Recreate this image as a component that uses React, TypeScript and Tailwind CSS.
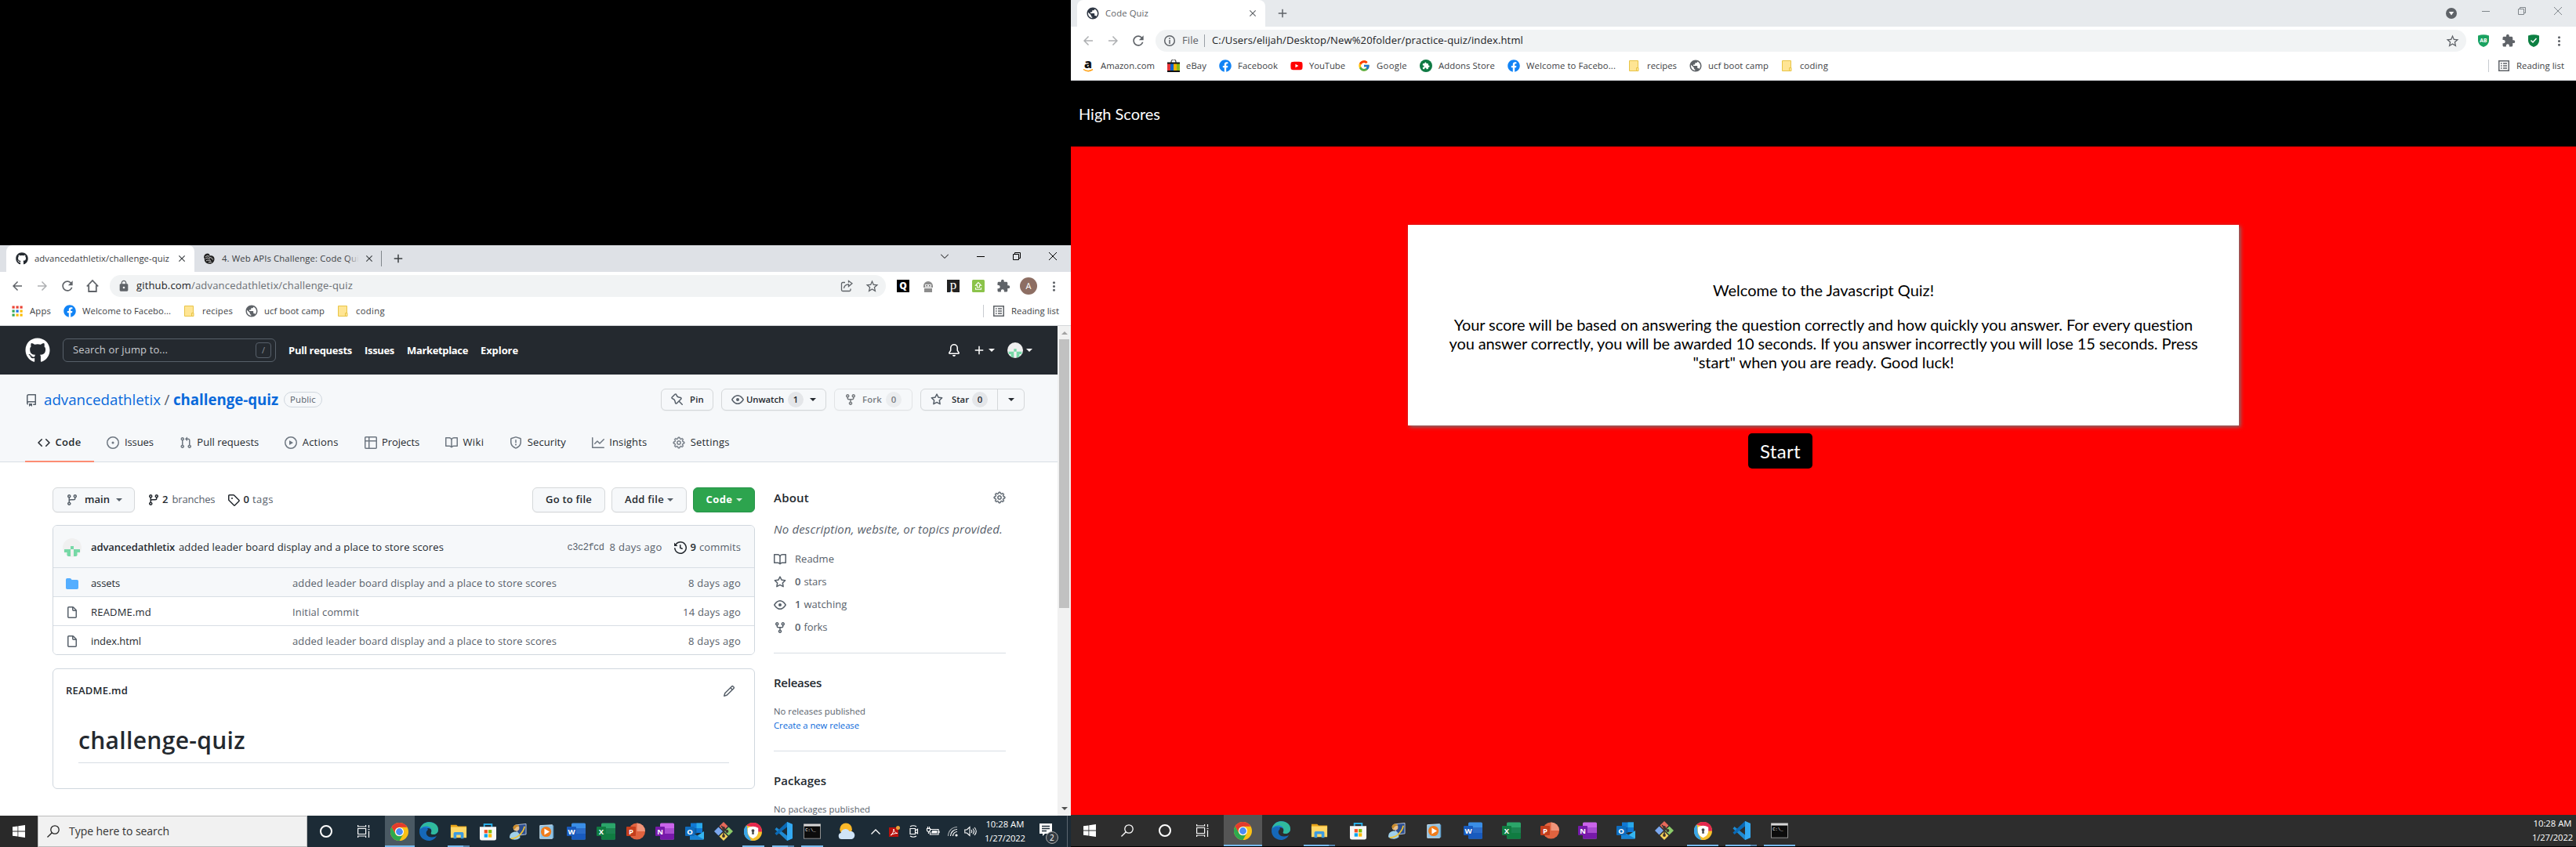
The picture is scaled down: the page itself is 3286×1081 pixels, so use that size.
import { useLayoutEffect, useRef, useState, type ReactNode } from "react";
import { GoGear } from "react-icons/go";
import { FaGithub, FaFacebook, FaYoutube } from "react-icons/fa";
import { FcGoogle } from "react-icons/fc";
import {
  MdArrowBack, MdArrowForward, MdRefresh, MdLock, MdStarBorder, MdExtension,
  MdMoreVert, MdPublic, MdAdd, MdClose,
} from "react-icons/md";

/** Single line of text whose tracking is adjusted to fill the width w. */
function T({ w, c = "", children }: { w: number; c?: string; children: string }) {
  const ref = useRef<HTMLSpanElement>(null);
  const [ls, setLs] = useState(0);
  useLayoutEffect(() => {
    const el = ref.current;
    if (!el) return;
    el.style.letterSpacing = "0px";
    const natural = el.getBoundingClientRect().width;
    const next = (w - natural) / children.length;
    el.style.letterSpacing = `${next}px`;
    setLs(next);
  }, [w, children]);
  return (
    <span ref={ref} className={`inline-block shrink-0 whitespace-pre ${c}`} style={{ letterSpacing: ls }}>
      {children}
    </span>
  );
}

const OCT: Record<string, string> = {
  repo: "M2 2.5A2.5 2.5 0 014.5 0h8.75a.75.75 0 01.75.75v12.5a.75.75 0 01-.75.75h-2.5a.75.75 0 110-1.5h1.75v-2h-8a1 1 0 00-.714 1.7.75.75 0 01-1.072 1.05A2.495 2.495 0 012 11.5v-9zm10.5-1V9h-8c-.356 0-.694.074-1 .208V2.5a1 1 0 011-1h8zM5 12.25v3.25a.25.25 0 00.4.2l1.45-1.087a.25.25 0 01.3 0L8.6 15.7a.25.25 0 00.4-.2v-3.25a.25.25 0 00-.25-.25h-3.5a.25.25 0 00-.25.25z",
  code: "M4.72 3.22a.75.75 0 011.06 1.06L2.06 8l3.72 3.72a.75.75 0 11-1.06 1.06L.47 8.53a.75.75 0 010-1.06l4.25-4.25zm6.56 0a.75.75 0 10-1.06 1.06L13.94 8l-3.72 3.72a.75.75 0 101.06 1.06l4.25-4.25a.75.75 0 000-1.06l-4.25-4.25z",
  issue: "M8 9.5a1.5 1.5 0 100-3 1.5 1.5 0 000 3zM8 0a8 8 0 100 16A8 8 0 008 0zM1.5 8a6.5 6.5 0 1113 0 6.5 6.5 0 01-13 0z",
  pr: "M7.177 3.073L9.573.677A.25.25 0 0110 .854v4.792a.25.25 0 01-.427.177L7.177 3.427a.25.25 0 010-.354zM3.75 2.5a.75.75 0 100 1.5.75.75 0 000-1.5zm-2.25.75a2.25 2.25 0 113 2.122v5.256a2.251 2.251 0 11-1.5 0V5.372A2.25 2.25 0 011.5 3.25zM11 2.5h-1V4h1a1 1 0 011 1v5.628a2.251 2.251 0 101.5 0V5A2.5 2.5 0 0011 2.5zm1 10.25a.75.75 0 111.5 0 .75.75 0 01-1.5 0zM3.75 12a.75.75 0 100 1.5.75.75 0 000-1.5z",
  play: "M1.5 8a6.5 6.5 0 1113 0 6.5 6.5 0 01-13 0zM8 0a8 8 0 100 16A8 8 0 008 0zM6.379 5.227A.25.25 0 006 5.442v5.117a.25.25 0 00.379.214l4.264-2.559a.25.25 0 000-.428L6.379 5.227z",
  table: "M0 1.75C0 .784.784 0 1.75 0h12.5C15.216 0 16 .784 16 1.75v12.5A1.75 1.75 0 0114.25 16H1.75A1.75 1.75 0 010 14.25V1.75zM1.5 6.5v7.75c0 .138.112.25.25.25H5v-8H1.5zM5 5H1.5V1.75a.25.25 0 01.25-.25H5V5zm1.5 1.5v8h7.75a.25.25 0 00.25-.25V6.5h-8zm8-1.5h-8V1.5h7.75a.25.25 0 01.25.25V5z",
  book: "M0 1.75A.75.75 0 01.75 1h4.253c1.227 0 2.317.59 3 1.501A3.744 3.744 0 0111.006 1h4.245a.75.75 0 01.75.75v10.5a.75.75 0 01-.75.75h-4.507a2.25 2.25 0 00-1.591.659l-.622.621a.75.75 0 01-1.06 0l-.622-.621A2.25 2.25 0 005.258 13H.75a.75.75 0 01-.75-.75V1.75zm8.755 3a2.25 2.25 0 012.25-2.25H14.5v9h-3.757c-.71 0-1.4.201-1.992.572l.004-7.322zm-1.504 7.324l.004-5.073-.002-2.253A2.25 2.25 0 005.003 2.5H1.5v9h3.757a3.75 3.75 0 011.994.574z",
  shield: "M7.467.133a1.75 1.75 0 011.066 0l5.25 1.68A1.75 1.75 0 0115 3.48V7c0 1.566-.32 3.182-1.303 4.682-.983 1.498-2.585 2.813-5.032 3.855a1.7 1.7 0 01-1.33 0c-2.447-1.042-4.049-2.357-5.032-3.855C1.32 10.182 1 8.566 1 7V3.48a1.75 1.75 0 011.217-1.667l5.25-1.68zm.61 1.429a.25.25 0 00-.153 0l-5.25 1.68a.25.25 0 00-.174.238V7c0 1.358.275 2.666 1.057 3.86.784 1.194 2.121 2.34 4.366 3.297a.2.2 0 00.154 0c2.245-.956 3.582-2.104 4.366-3.298C13.225 9.666 13.5 8.36 13.5 7V3.48a.25.25 0 00-.174-.237l-5.25-1.68zM9 10.5a1 1 0 11-2 0 1 1 0 012 0zm-.25-5.75a.75.75 0 10-1.5 0v3a.75.75 0 001.5 0v-3z",
  graph: "M1.5 1.75a.75.75 0 00-1.5 0v12.5c0 .414.336.75.75.75h14.5a.75.75 0 000-1.5H1.5V1.75zm14.28 2.53a.75.75 0 00-1.06-1.06L10 7.94 7.53 5.47a.75.75 0 00-1.06 0L3.22 8.72a.75.75 0 001.06 1.06L7 7.06l2.47 2.47a.75.75 0 001.06 0l5.25-5.25z",
  eye: "M1.679 7.932c.412-.621 1.242-1.75 2.366-2.717C5.175 4.242 6.527 3.5 8 3.5c1.473 0 2.824.742 3.955 1.715 1.124.967 1.954 2.096 2.366 2.717a.119.119 0 010 .136c-.412.621-1.242 1.75-2.366 2.717C10.825 11.758 9.473 12.5 8 12.5c-1.473 0-2.824-.742-3.955-1.715C2.92 9.818 2.09 8.69 1.679 8.068a.119.119 0 010-.136zM8 2c-1.981 0-3.67.992-4.933 2.078C1.797 5.169.88 6.423.43 7.1a1.619 1.619 0 000 1.798c.45.678 1.367 1.932 2.637 3.024C4.329 13.008 6.019 14 8 14c1.981 0 3.67-.992 4.933-2.078 1.27-1.091 2.187-2.345 2.637-3.023a1.619 1.619 0 000-1.798c-.45-.678-1.367-1.932-2.637-3.023C11.671 2.992 9.981 2 8 2zm0 8a2 2 0 100-4 2 2 0 000 4z",
  fork: "M5 3.25a.75.75 0 11-1.5 0 .75.75 0 011.5 0zm0 2.122a2.25 2.25 0 10-1.5 0v.878A2.25 2.25 0 005.75 8.5h1.5v2.128a2.251 2.251 0 101.5 0V8.5h1.5a2.25 2.25 0 002.25-2.25v-.878a2.25 2.25 0 10-1.5 0v.878a.75.75 0 01-.75.75h-4.5A.75.75 0 015 6.25v-.878zm3.75 7.378a.75.75 0 11-1.5 0 .75.75 0 011.5 0zm3-8.75a.75.75 0 100-1.5.75.75 0 000 1.5z",
  star: "M8 .25a.75.75 0 01.673.418l1.882 3.815 4.21.612a.75.75 0 01.416 1.279l-3.046 2.97.719 4.192a.75.75 0 01-1.088.791L8 12.347l-3.766 1.98a.75.75 0 01-1.088-.79l.72-4.194L.818 6.374a.75.75 0 01.416-1.28l4.21-.611L7.327.668A.75.75 0 018 .25zm0 2.445L6.615 5.5a.75.75 0 01-.564.41l-3.097.45 2.24 2.184a.75.75 0 01.216.664l-.528 3.084 2.769-1.456a.75.75 0 01.698 0l2.77 1.456-.53-3.084a.75.75 0 01.216-.664l2.24-2.183-3.096-.45a.75.75 0 01-.564-.41L8 2.694v.001z",
  branch: "M11.75 2.5a.75.75 0 100 1.5.75.75 0 000-1.5zm-2.25.75a2.25 2.25 0 113 2.122V6A2.5 2.5 0 0110 8.5H6a1 1 0 00-1 1v1.128a2.251 2.251 0 11-1.5 0V5.372a2.25 2.25 0 111.5 0v1.836A2.492 2.492 0 016 7h4a1 1 0 001-1v-.628A2.25 2.25 0 019.5 3.25zM4.25 12a.75.75 0 100 1.5.75.75 0 000-1.5zM3.5 3.25a.75.75 0 111.5 0 .75.75 0 01-1.5 0z",
  tag: "M2.5 7.775V2.75a.25.25 0 01.25-.25h5.025a.25.25 0 01.177.073l6.25 6.25a.25.25 0 010 .354l-5.025 5.025a.25.25 0 01-.354 0l-6.25-6.25a.25.25 0 01-.073-.177zm-1.5 0V2.75C1 1.784 1.784 1 2.75 1h5.025c.464 0 .91.184 1.238.513l6.25 6.25a1.75 1.75 0 010 2.474l-5.026 5.026a1.75 1.75 0 01-2.474 0l-6.25-6.25A1.75 1.75 0 011 7.775zM6 5a1 1 0 100 2 1 1 0 000-2z",
  history: "M1.643 3.143L.427 1.927A.25.25 0 000 2.104V5.75c0 .138.112.25.25.25h3.646a.25.25 0 00.177-.427L2.715 4.215a6.5 6.5 0 11-1.18 4.458.75.75 0 10-1.493.154 8.001 8.001 0 101.6-5.684zM7.75 4a.75.75 0 01.75.75v2.992l2.028.812a.75.75 0 01-.557 1.392l-2.5-1A.75.75 0 017 8.25v-3.5A.75.75 0 017.75 4z",
  file: "M3.75 1.5a.25.25 0 00-.25.25v11.5c0 .138.112.25.25.25h8.5a.25.25 0 00.25-.25V6H9.75A1.75 1.75 0 018 4.25V1.5H3.75zm5.75.56v2.19c0 .138.112.25.25.25h2.19L9.5 2.06zM2 1.75C2 .784 2.784 0 3.75 0h5.086c.464 0 .909.184 1.237.513l3.414 3.414c.329.328.513.773.513 1.237v8.086A1.75 1.75 0 0112.25 15h-8.5A1.75 1.75 0 012 13.25V1.75z",
  dir: "M1.75 1A1.75 1.75 0 000 2.75v10.5C0 14.216.784 15 1.75 15h12.5A1.75 1.75 0 0016 13.25v-8.5A1.75 1.75 0 0014.25 3h-6.5a.25.25 0 01-.2-.1l-.9-1.2c-.33-.44-.85-.7-1.4-.7h-3.5z",
  pencil: "M11.013 1.427a1.75 1.75 0 012.474 0l1.086 1.086a1.75 1.75 0 010 2.474l-8.61 8.61c-.21.21-.47.364-.756.445l-3.251.93a.75.75 0 01-.927-.928l.929-3.25a1.75 1.75 0 01.445-.758l8.61-8.61zm1.414 1.06a.25.25 0 00-.354 0L10.811 3.75l1.439 1.44 1.263-1.263a.25.25 0 000-.354l-1.086-1.086zM11.189 6.25L9.75 4.81l-6.286 6.287a.25.25 0 00-.064.108l-.558 1.953 1.953-.558a.249.249 0 00.108-.064l6.286-6.286z",
  bell: "M8 16a2 2 0 001.985-1.75c.017-.137-.097-.25-.235-.25h-3.5c-.138 0-.252.113-.235.25A2 2 0 008 16zM8 1.5A3.5 3.5 0 004.5 5v2.947c0 .346-.102.683-.294.97l-1.703 2.556L2.52 11.5h10.964l-1.703-2.583a1.75 1.75 0 01-.294-.97V5A3.5 3.5 0 008 1.5zM3 5a5 5 0 0110 0v2.947c0 .05.015.098.042.139l1.703 2.555A1.518 1.518 0 0113.482 13H2.518a1.518 1.518 0 01-1.263-2.36l1.703-2.554A.25.25 0 003 7.947V5z",
  pin: "M4.456.734a1.75 1.75 0 012.826.504l.613 1.327a3.081 3.081 0 002.084 1.707l2.454.584c1.332.317 1.8 1.972.832 2.94L11.06 10l3.72 3.72a.75.75 0 11-1.061 1.06L10 11.06l-2.204 2.205c-.968.968-2.623.5-2.94-.832l-.584-2.454a3.081 3.081 0 00-1.707-2.084l-1.327-.613a1.75 1.75 0 01-.504-2.826L4.456.734zM5.92 1.866a.25.25 0 00-.404-.072L1.794 5.516a.25.25 0 00.072.404l1.328.613A4.582 4.582 0 015.73 9.63l.584 2.454a.25.25 0 00.42.12l5.47-5.47a.25.25 0 00-.12-.42L9.63 5.73a4.581 4.581 0 01-3.098-2.537L5.92 1.866z",
};

function Oct({ n, c = "" }: { n: string; c?: string }) {
  return (
    <svg viewBox="0 0 16 16" className={`size-4 shrink-0 fill-current ${c}`}>
      <path fillRule="evenodd" d={OCT[n]} />
    </svg>
  );
}

function Caret({ c = "" }: { c?: string }) {
  return (
    <svg viewBox="0 0 8 4" className={`h-1 w-2 shrink-0 fill-current ${c}`}>
      <path d="M0 0h8L4 4z" />
    </svg>
  );
}

function Cell({ children, c = "w-8" }: { children?: ReactNode; c?: string }) {
  return <div className={`flex shrink-0 items-center justify-center ${c}`}>{children}</div>;
}

function Identicon({ c }: { c: string }) {
  return (
    <svg viewBox="0 0 24 24" className={`shrink-0 ${c}`}>
      <clipPath id="round"><circle cx="12" cy="12" r="12" /></clipPath>
      <g clipPath="url(#round)">
        <path fill="#f0f0f0" d="M0 0h24v24H0z" />
        <path fill="#76d8a6" d="M10 10h4v4h-4zM2 14h8v4H2zM14 14h8v4h-8zM5.500 18h4.500v5H5.500zM14 18h4.500v5H14z" />
      </g>
    </svg>
  );
}

/* ---------- browser chrome icons ---------- */

const FolderMark = () => (
  <svg viewBox="0 0 16 16" className="size-4 shrink-0">
    <path d="M1.500 1.500h11v13h-11z" fill="#ffe594" stroke="#e8c447" />
    <path d="M10.500 10.500H13v4h-2.500z" fill="#ffe594" stroke="#e8c447" />
  </svg>
);
const AppsMark = () => (
  <svg viewBox="0 0 16 16" className="size-4 shrink-0">
    {["#ea4335", "#ea4335", "#ea4335", "#34a853", "#1a73e8", "#fbbc04", "#34a853", "#fbbc04", "#fbbc04"].map((f, i) => (
      <rect key={i} x={1.500 + (i % 3) * 5} y={1.500 + Math.floor(i / 3) * 5} width="3.200" height="3.200" fill={f} />
    ))}
  </svg>
);
const Home = () => (
  <svg viewBox="0 0 20 20" className="size-5 fill-none stroke-[#5f6368] stroke-[1.8]">
    <path d="M2.800 10.500L10 3l7.200 7.500M5.200 9v8h9.600V9" />
  </svg>
);
const Share = () => (
  <svg viewBox="0 0 16 16" className="size-4 fill-none stroke-[#5f6368] stroke-[1.3]">
    <path d="M6 3.500H3A1.500 1.500 0 001.500 5v8A1.500 1.500 0 003 14.500h8.500A1.500 1.500 0 0013 13v-1.500M4.500 11c.5-3.500 2.500-5 6-5.200V8.500L15 4.800 10.500 1.500v2.300" />
  </svg>
);
const Reading = () => (
  <svg viewBox="0 0 16 16" className="size-4 shrink-0 fill-none stroke-[#5f6368]">
    <path strokeWidth="1.500" d="M1.750 1.750h12.500v12.500H1.750z" />
    <path strokeWidth="1.400" d="M4 5h1.600M7 5h5M4 8h1.600M7 8h5M4 11h1.600M7 11h5" />
  </svg>
);
const Ebay = () => (
  <svg viewBox="0 0 16 16" className="size-4 shrink-0">
    <path d="M5 5V3a3 3 0 016 0v2" fill="none" stroke="#444" strokeWidth="1.200" />
    <path fill="#111" d="M0 3.500h16V16H0z" />
    <path fill="#e53238" d="M0 5.500h4V14H0z" /><path fill="#0064d2" d="M4 5.500h4V14H4z" />
    <path fill="#f5af02" d="M8 5.500h4V14H8z" /><path fill="#86b817" d="M12 5.500h4V14h-4z" />
  </svg>
);
const Amazon = () => (
  <svg viewBox="0 0 16 16" className="size-4 shrink-0 overflow-visible">
    <text x="3" y="11" fontSize="16" fontWeight="800" fontFamily="Open Sans, sans-serif" fill="#111">a</text>
    <path d="M2 12.500c4 2.700 8.500 2.600 12 .2" fill="none" stroke="#f90" strokeWidth="1.500" />
  </svg>
);
const Addons = () => (
  <span className="flex size-4 items-center justify-center rounded-full bg-[#0f7a44] text-white"><MdExtension className="size-2.5" /></span>
);
const Swirl = () => (
  <svg viewBox="0 0 16 16" className="size-4 shrink-0">
    <path fill="#222" d="M1.500 4C4 .2 9 1 8.500 4.500c3-1 6.500 1 6 4.800-.4 3.500-3.500 6-7 5.500C4 14.500 1 11.500 2 8l-1-1z" />
    <path fill="none" stroke="#fff" strokeWidth=".8" d="M3 6c2-2 4-1.500 5-.5M3 8.500c2-2 4-1.500 6 .500M4 11c1.500-1.500 4-1 6 0M8 6.500c2 0 4 1 4.500 3M7 13c1.500-1 3-.5 4 0" />
  </svg>
);
const Ninja = () => (
  <svg viewBox="0 0 16 16" className="size-4">
    <path fill="#8d8d8d" d="M2 8a6 6 0 0112 0v2H2zM3 11h10v5H3z" /><path fill="#e8e8e8" d="M4 6h8v3.500H4z" />
    <path fill="#555" d="M5.500 7h1.500v1.200H5.500zM9 7h1.500v1.200H9z" />
  </svg>
);
const GreenUp = () => (
  <svg viewBox="0 0 16 16" className="size-4">
    <rect width="16" height="16" rx="1.500" fill="#8bc34a" />
    <path d="M8 3.500L4.500 7.200h2v2.600h3V7.200h2zM4.500 10v2.200h7V10" fill="none" stroke="#fff" strokeWidth="1.100" />
  </svg>
);
const ShieldAB = () => (
  <svg viewBox="0 0 16 16" className="size-4">
    <path fill="#1aa260" d="M1 1.500Q8-1 15 1.500V8q0 5-7 8-7-3-7-8z" />
    <text x="8" y="9.500" textAnchor="middle" fontSize="6.800" fontWeight="700" fontFamily="Open Sans, sans-serif" fill="#fff">AB</text>
  </svg>
);
const ShieldCheck = () => (
  <svg viewBox="0 0 16 16" className="size-4">
    <path fill="#0d8043" d="M1 1.500Q8-1 15 1.500V8q0 5-7 8-7-3-7-8z" />
    <path d="M4.500 7.500L7 10l4.500-5" fill="none" stroke="#fff" strokeWidth="1.500" />
  </svg>
);
const Info = () => (
  <svg viewBox="0 0 16 16" className="size-4 shrink-0 fill-none stroke-[#5f6368] stroke-[1.5]">
    <circle cx="8" cy="8" r="6.300" /><path d="M8 4.300v1.600M8 7v5" />
  </svg>
);
const Min = () => <svg viewBox="0 0 10 10" className="size-2.5 fill-none stroke-current"><path d="M0 5.500h10" /></svg>;
const Restore = () => <svg viewBox="0 0 10 10" className="size-2.5 overflow-visible fill-none stroke-current"><path d="M.5 2.500h7v7h-7zM2.500 2.500v-2h7v7h-2" /></svg>;
const Close = () => <svg viewBox="0 0 10 10" className="size-2.5 fill-none stroke-current"><path d="M0 0l10 10M10 0L0 10" /></svg>;

function Mark({ icon, text, w }: { icon: ReactNode; text: string; w: number }) {
  return (
    <div className="flex shrink-0 items-center gap-2 text-[11.3px] text-[#3c4043]">
      {icon}
      <T w={w}>{text}</T>
    </div>
  );
}
const Fb = () => <FaFacebook className="size-4 shrink-0 text-[#1183f5]" />;
const Globe = () => <MdPublic className="size-[18px] -mx-px shrink-0 text-[#5f6368]" />;

/* ---------- taskbar icons ---------- */

const Win = () => (
  <svg viewBox="0 0 16 16" className="size-4 fill-white"><path d="M0 2.300L6.500 1.400v6.200H0zM7.300 1.300L16 0v7.600H7.300zM0 8.400h6.500v6.200L0 13.700zM7.300 8.400H16V16l-8.700-1.300z" /></svg>
);
const Lens = ({ c }: { c: string }) => (
  <svg viewBox="0 0 16 16" className={`size-4 shrink-0 fill-none stroke-[1.3] ${c}`}><circle cx="10" cy="6" r="5.200" /><path d="M6.300 9.700L.5 15.500" /></svg>
);
const Ring = () => <span className="size-4 rounded-full border-2 border-white" />;
const TaskView = () => (
  <svg viewBox="0 0 16 16" className="size-4 fill-none stroke-white stroke-[1.2]"><path d="M.6 4.500h10v7H.6zM.6 0v2h10V0M.6 16v-2h10v2M14.500 0v3.500M14.500 7.500V16M13.500 5.500h2" /></svg>
);
const Chrome = () => (
  <svg viewBox="0 0 24 24" className="size-[23px]">
    <circle cx="12" cy="12" r="12" fill="#fbc116" />
    <path fill="#e33b2e" d="M1.600 6A12 12 0 0122.400 6H12a6 6 0 00-5.200 9z" />
    <path fill="#2da94f" d="M1.600 6a12 12 0 0010.400 18l5.200-9a6 6 0 01-10.400 0z" />
    <circle cx="12" cy="12" r="5.800" fill="#fff" /><circle cx="12" cy="12" r="4.600" fill="#4b8bf5" />
  </svg>
);
const Edge = () => (
  <svg viewBox="0 0 24 24" className="size-6">
    <path fill="#1b7fd4" d="M0 12.500C0 5.500 5.500 0 12.200 0 19 0 24 4.500 24 10c0 3.600-2.700 6-6 6-2.500 0-4-1-3-2.500 1.500-2.500-.5-5.500-4-5.500C4 8 0 10 0 12.500z" />
    <path fill="#36c98f" d="M6 2C13-2 24 1 24 10c0 3.600-2.700 6-6 6-2.500 0-4-1-3-2.500C17 9 13 5.500 8.500 5.500 5.500 5.500 3 6.500 1 9 1.500 6 3.500 3.500 6 2z" opacity=".8" />
    <path fill="#1668b8" d="M0 12.500C0 9 4 6.500 8.500 7.500c3 .6 3 2.500 1 4-1.500 1.200-1.500 8 6.500 8 2.500 0 4.500-1 6-1.500C20 21.500 16.500 24 12 24 5.500 24 0 19 0 12.500z" />
  </svg>
);
const Explorer = () => (
  <svg viewBox="0 0 24 24" className="size-[22px]">
    <path fill="#e8a317" d="M1 3h8l2 2h12v5H1z" /><path fill="#ffd766" d="M1 6h22v15H1z" />
    <path fill="#3d9be0" d="M5 21v-6a2 2 0 012-2h10a2 2 0 012 2v7h-4v-5H9v5H5z" />
  </svg>
);
const Store = () => (
  <svg viewBox="0 0 24 24" className="size-[23px]">
    <path d="M7 6V2h10v4" fill="none" stroke="#27aee8" strokeWidth="2" />
    <path fill="#f7f7f7" d="M1 5.500h22V21a2.500 2.500 0 01-2.500 2.500h-17A2.500 2.500 0 011 21z" />
    <path fill="#f25022" d="M7 9.500h4.500V14H7z" /><path fill="#7fba00" d="M12.500 9.500H17V14h-4.500z" />
    <path fill="#00a4ef" d="M7 15h4.500v4.500H7z" /><path fill="#ffb900" d="M12.500 15H17v4.500h-4.500z" />
  </svg>
);
const Remote = () => (
  <svg viewBox="0 0 24 24" className="size-[23px]">
    <path fill="#2b4d8f" stroke="#b9c7dc" d="M9 3l14-1.500v14L12 17z" />
    <circle cx="10" cy="7" r="4" fill="#e8c08a" /><path fill="#c98a2b" d="M5.500 7C6 2 13 1 14 5c-3-.5-5 1-6 4z" />
    <path fill="#9fd0ea" d="M1 20c0-6 4-8 8-8s6 3 6 8c-4 3.500-10 3.500-14 0z" />
    <path fill="none" stroke="#f1c232" strokeWidth="1.800" d="M3 21C10 21 19 15 21 5" />
  </svg>
);
const Media = () => (
  <svg viewBox="0 0 24 24" className="size-[21px]">
    <path fill="#8ec3e6" stroke="#d9edf8" d="M2 3l18-1v20H2z" /><path fill="#5f9dc9" d="M20 2l2 1v18l-2 1z" />
    <circle cx="11" cy="12" r="7.500" fill="#f07c1c" /><path fill="#fff" d="M8.500 7.500L16 12l-7.500 4.500z" />
  </svg>
);
function Office({ l, a, b, d, round }: { l: string; a: string; b: string; d: string; round?: boolean }) {
  return (
    <svg viewBox="0 0 24 24" className="size-6">
      {round ? (
        <><circle cx="13.500" cy="12" r="10.500" fill={a} /><path fill={b} d="M13.500 1.500A10.500 10.500 0 0124 12H13.500z" /></>
      ) : (
        <><rect x="6" y="1.500" width="18" height="21" rx="1.500" fill={a} /><path fill={b} d="M6 8h18v7H6z" /><path fill={d} d="M6 15h18v6a1.500 1.500 0 01-1.500 1.500h-15A1.500 1.500 0 016 21z" /></>
      )}
      <rect y="6" width="12" height="12" rx="1" fill={d} />
      <text x="6" y="15.500" textAnchor="middle" fontSize="9.500" fontWeight="700" fontFamily="Open Sans, sans-serif" fill="#fff">{l}</text>
    </svg>
  );
}
const Outlook = () => (
  <svg viewBox="0 0 24 24" className="size-6">
    <path fill="#0f78d4" d="M7 1.500h15V14H7z" /><path fill="#28a8ea" d="M14.500 1.500H22V8h-7.500z" />
    <path fill="#0a5ea8" d="M7 8h7.500v7H7z" /><path fill="#35b5ef" d="M6 22.500V13l9 5 9-6v9a1.500 1.500 0 01-1.500 1.500z" /><path fill="#1782d4" d="M6 12l18 10.500H6z" />
    <rect y="6" width="12" height="12" rx="1" fill="#0f6cbd" />
    <text x="6" y="15.500" textAnchor="middle" fontSize="9.500" fontWeight="700" fontFamily="Open Sans, sans-serif" fill="#fff">O</text>
  </svg>
);
const Git = () => (
  <svg viewBox="0 0 24 24" className="size-6">
    <path fill="#e8695a" d="M12 0l5.500 5.500L12 11 6.500 5.500z" /><path fill="#7ba7ee" d="M5.500 6.500L11 12l-5.500 5.500L0 12z" />
    <path fill="#8ccb6a" d="M18.500 6.500L24 12l-5.500 5.500L13 12z" /><path fill="#f3d15b" d="M12 13l5.500 5.500L12 24l-5.500-5.500z" />
    <path d="M9 5l3 3v10M12 8l4 4" fill="none" stroke="#3d3330" strokeWidth="1.500" />
    <g fill="#3d3330"><circle cx="12" cy="8" r="1.900" /><circle cx="16.500" cy="12" r="1.900" /><circle cx="12" cy="18" r="1.900" /></g>
  </svg>
);
const Secure = () => (
  <svg viewBox="0 0 24 24" className="size-[23px]">
    <circle cx="12" cy="12" r="12" fill="#f5c02c" /><path fill="#e5284e" d="M12 0a12 12 0 0112 12h-8L12 5 4 4a12 12 0 018-4z" />
    <path fill="#3aa6e8" d="M4 3a12 12 0 006 21l-5-9z" /><path fill="#e5284e" d="M3 4C8-1 18-2 22.500 6L10 5z" />
    <path fill="#fff" d="M5 7q7-4 14 0v5q0 6-7 9-7-3-7-9z" /><circle cx="12" cy="10.500" r="2" fill="#444" /><path fill="#444" d="M11.200 11h1.600l.7 4.500h-3z" />
  </svg>
);
const Code = () => (
  <svg viewBox="0 0 24 24" className="size-6">
    <path fill="#1f8ad2" d="M17 0l7 3v18l-7 3L1.500 9.500l2-2.500L17 17.500z" /><path fill="#0a6ab6" d="M1.500 14.500L17 0v6.500L3.500 17z" /><path fill="#33a9f2" d="M17 0l7 3v18l-7 3z" />
  </svg>
);
const Cmd = () => (
  <svg viewBox="0 0 24 24" className="size-[22px]">
    <rect x=".5" y="2" width="23" height="20" fill="#0c0c0c" stroke="#9a9a9a" /><path fill="#d8d8d8" d="M.5 2h23v3H.5z" />
    <text x="2.500" y="11.500" fontSize="6" fontFamily="Liberation Mono, monospace" fill="#fff">C:\_</text>
  </svg>
);

const APPS: { icon: ReactNode; run?: "one" | "two" | "active" }[] = [
  { icon: <Chrome />, run: "active" },
  { icon: <Edge /> },
  { icon: <Explorer />, run: "two" },
  { icon: <Store /> },
  { icon: <Remote /> },
  { icon: <Media /> },
  { icon: <Office l="W" a="#3a8ee6" b="#2b6cc8" d="#185abd" /> },
  { icon: <Office l="X" a="#2ba56a" b="#1c8350" d="#107c41" /> },
  { icon: <Office l="P" a="#e0633f" b="#f0957a" d="#c43e1c" round /> },
  { icon: <Office l="N" a="#ca64ea" b="#a94bd0" d="#7719aa" /> },
  { icon: <Outlook /> },
  { icon: <Git /> },
  { icon: <Secure />, run: "one" },
  { icon: <Code />, run: "two" },
  { icon: <Cmd />, run: "one" },
];

function AppButtons({ cell, active, bar, tail }: { cell: string; active: string; bar: string; tail: string }) {
  return (
    <>
      {APPS.map((a, i) => (
        <div key={i} className={`relative flex h-10 shrink-0 items-center justify-center ${cell} ${a.run === "active" ? active : ""}`}>
          {a.icon}
          {a.run && (
            <div className="absolute inset-x-0 bottom-0 flex h-0.5 justify-center">
              <span className={`bg-[#76b9ed] ${a.run === "active" ? "w-full" : bar}`} />
              {a.run === "two" && <span className={`bg-[#5384ad] ${tail}`} />}
            </div>
          )}
        </div>
      ))}
    </>
  );
}

function Clock() {
  return (
    <div className="flex shrink-0 flex-col items-center text-[11.3px] leading-[18px] text-white">
      <T w={49}>10:28 AM</T>
      <T w={52}>1/27/2022</T>
    </div>
  );
}

/* ---------- left display ---------- */

const REPO_TABS: [string, string, number][] = [
  ["code", "Code", 33], ["issue", "Issues", 37], ["pr", "Pull requests", 79], ["play", "Actions", 46], ["table", "Projects", 48],
  ["book", "Wiki", 27], ["shield", "Security", 49], ["graph", "Insights", 48], ["gear", "Settings", 50],
];
const FILES: [string, string, number, string, number, string, number][] = [
  ["dir", "assets", 37, "added leader board display and a place to store scores", 337, "8 days ago", 67],
  ["file", "README.md", 77, "Initial commit", 85, "14 days ago", 74],
  ["file", "index.html", 64, "added leader board display and a place to store scores", 337, "8 days ago", 67],
];

const BTN = "flex shrink-0 items-center rounded-md border border-[#d5d8da] bg-[#f6f8fa] font-semibold text-[#24292f] shadow-[0_1px_0_rgba(27,31,36,0.04)]";

function Counter({ children }: { children: string }) {
  return <span className="flex h-5 w-5 items-center justify-center rounded-full bg-[#e4e6e9] text-[11.3px]">{children}</span>;
}

function GitHubHeader() {
  return (
    <div className="flex h-[62px] shrink-0 items-center bg-[#24292f] pl-8 text-white">
      <FaGithub className="size-8 shrink-0" />
      <div className="ml-4 flex h-[30px] w-[272px] shrink-0 items-center justify-between rounded-md border border-[#57606a] pr-[5px] pl-3 text-[13px] text-[#c9ccd0]">
        <T w={121}>Search or jump to...</T>
        <span className="flex h-5 w-5 items-center justify-center rounded border border-[#57606a] text-[11px] text-[#8b9096]">/</span>
      </div>
      <div className="ml-4 flex items-center gap-4 pt-px text-[13px] font-bold">
        <T w={81}>Pull requests</T><T w={38}>Issues</T><T w={78}>Marketplace</T><T w={48}>Explore</T>
      </div>
      <div className="ml-auto flex items-center pr-8">
        <Oct n="bell" />
        <MdAdd className="ml-[15px] size-[18px]" /><Caret c="ml-[3px]" />
        <Identicon c="ml-4 size-5" /><Caret c="ml-1" />
      </div>
    </div>
  );
}

function RepoHead() {
  return (
    <div className="h-[112px] shrink-0 border-b border-[#d8dee4] bg-[#f6f8fa] pt-[18px]">
      <div className="flex h-7 items-center pl-8">
        <Oct n="repo" c="mt-px text-[#57606a]" />
        <div className="ml-2 flex items-center text-[18.7px] text-[#0969da]">
          <T w={149}>advancedathletix</T>
          <span className="mx-1 w-2 text-center text-[#57606a]">/</span>
          <T w={134} c="font-bold">challenge-quiz</T>
        </div>
        <div className="ml-[7px] flex h-5 w-[49px] items-center justify-center rounded-full border border-[#d0d7de] text-[11.3px] font-medium text-[#57606a]">
          <T w={33}>Public</T>
        </div>
        <div className="ml-auto flex gap-2.5 pr-[42px] text-[11.3px]">
          <div className={`${BTN} h-7 w-[67px] pl-3`}><Oct n="pin" c="text-[#57606a]" /><T w={18} c="ml-2">Pin</T></div>
          <div className={`${BTN} h-7 w-[134px] pl-3`}>
            <Oct n="eye" c="text-[#57606a]" /><T w={48} c="ml-[3px] mr-[5px]">Unwatch</T><Counter>1</Counter><Caret c="ml-2" />
          </div>
          <div className={`${BTN} h-7 w-[100px] pl-3 opacity-60`}>
            <Oct n="fork" /><T w={25} c="ml-[7px] mr-[5px]">Fork</T><Counter>0</Counter>
          </div>
          <div className={`${BTN} h-7 w-[133px] pl-3`}>
            <Oct n="star" c="text-[#57606a]" /><T w={22} c="ml-[11px] mr-1">Star</T><Counter>0</Counter>
            <span className="ml-3 flex h-full w-[34px] items-center justify-center border-l border-[#d5d8da]"><Caret /></span>
          </div>
        </div>
      </div>
      <div className="mt-[17px] flex h-12 items-center gap-[32.9px] pl-12 text-[13px] text-[#24292f]">
        {REPO_TABS.map(([n, label, w], i) => (
          <div key={label} className="relative flex h-full items-center gap-[6.5px]">
            {n === "gear" ? <GoGear className="size-4 stroke-[#6e7781] stroke-[0.6] text-[#6e7781]" /> : <Oct n={n} c={i ? "text-[#6e7781]" : ""} />}
            <T w={w} c={i ? "" : "font-semibold"}>{label}</T>
            {i === 0 && <span className="absolute -right-4 -bottom-px -left-4 h-0.5 bg-[#fd8c73]" />}
          </div>
        ))}
      </div>
    </div>
  );
}

function FilesColumn() {
  return (
    <div className="ml-[67px] w-[896px] shrink-0 pt-8 text-[13px] text-[#24292f]">
      <div className="flex h-8 items-center">
        <div className={`${BTN} h-8 w-[105px] pl-4`}><Oct n="branch" c="text-[#57606a]" /><T w={32} c="ml-2">main</T><Caret c="ml-2 text-[#57606a]" /></div>
        <Oct n="branch" c="ml-4" /><span className="ml-[3px] font-semibold">2</span><T w={55} c="ml-[5px] text-[#57606a]">branches</T>
        <Oct n="tag" c="ml-4" /><span className="ml-1 font-semibold">0</span><T w={27} c="ml-1 text-[#57606a]">tags</T>
        <div className="ml-auto flex gap-2">
          <div className={`${BTN} h-8 w-[93px] justify-center`}><T w={59}>Go to file</T></div>
          <div className={`${BTN} h-8 w-[96px] justify-center gap-1`}><T w={50}>Add file</T><Caret c="text-[#57606a]" /></div>
          <div className="flex h-8 w-[79px] items-center justify-center gap-1 rounded-md border border-[#27934a] bg-[#2da44e] font-bold text-white"><T w={34}>Code</T><Caret c="opacity-80" /></div>
        </div>
      </div>
      <div className="mt-4 overflow-hidden rounded-md border border-[#d0d7de]">
        <div className="flex h-[53px] items-center bg-[#f6f8fa] pt-0.5 pr-[17px] pl-3">
          <Identicon c="size-6" />
          <T w={107} c="ml-3 font-semibold">advancedathletix</T><T w={338} c="ml-[5px]">added leader board display and a place to store scores</T>
          <div className="ml-auto flex items-center text-[#57606a]">
            <T w={47} c="font-['Liberation_Mono',monospace] text-xs">c3c2fcd</T>
            <T w={67} c="ml-[7px]">8 days ago</T>
            <Oct n="history" c="ml-[15px] text-[#24292f]" />
            <span className="ml-[5px] font-semibold text-[#24292f]">9</span><T w={53} c="ml-1">commits</T>
          </div>
        </div>
        {FILES.map(([n, name, nw, msg, mw, when, ww], i) => (
          <div key={name} className={`flex h-[37px] items-center border-t border-[#d8dee4] pt-[3px] pr-[17px] pl-4 ${i === 0 ? "bg-[#f6f8fa]" : "bg-white"}`}>
            <Oct n={n} c={n === "dir" ? "text-[#54aeff]" : "text-[#57606a]"} />
            <div className="ml-4 w-[257px]"><T w={nw}>{name}</T></div>
            <T w={mw} c="text-[#57606a]">{msg}</T>
            <T w={ww} c="ml-auto text-[#57606a]">{when}</T>
          </div>
        ))}
      </div>
      <div className="mt-[17px] h-[154px] rounded-md border border-[#d0d7de] px-4">
        <div className="flex h-[55px] items-center justify-between pr-2"><T w={79} c="font-semibold">README.md</T><Oct n="pencil" c="text-[#57606a]" /></div>
        <div className="mx-4 flex h-[65px] items-center border-b border-[#d8dee4] pt-1.5 text-[30px] font-semibold"><T w={213}>challenge-quiz</T></div>
      </div>
    </div>
  );
}

function Sidebar() {
  return (
    <div className="ml-6 w-[296px] shrink-0 text-[13px] text-[#57606a]">
      <div className="mt-[25px] flex h-10 items-center justify-between"><T w={45} c="text-[15px] font-semibold text-[#24292f]">About</T><GoGear className="size-4 stroke-[#57606a] stroke-[0.6]" /></div>
      <div className="flex h-10 items-center"><T w={292} c="text-[15px] italic">No description, website, or topics provided.</T></div>
      <div className="mt-1 h-[135px] border-b border-[#d8dee4]">
        <div className="flex h-[29px] items-center gap-[11px]"><Oct n="book" /><T w={50}>Readme</T></div>
        <div className="flex h-[29px] items-center gap-[11px]"><Oct n="star" /><div className="flex gap-1"><b className="font-semibold">0</b><T w={29}>stars</T></div></div>
        <div className="flex h-[29px] items-center gap-[11px]"><Oct n="eye" /><div className="flex gap-1"><b className="font-semibold">1</b><T w={55}>watching</T></div></div>
        <div className="flex h-[29px] items-center gap-[11px]"><Oct n="fork" /><div className="flex gap-1"><b className="font-semibold">0</b><T w={30}>forks</T></div></div>
      </div>
      <div className="h-[125px] border-b border-[#d8dee4] pt-[21px] text-[11.3px] leading-[18px]">
        <div className="flex h-8 items-center"><T w={61} c="text-[15px] font-semibold text-[#24292f]">Releases</T></div>
        <div className="mt-3"><T w={117} c="block">No releases published</T></div>
        <T w={109} c="text-[#0969da]">Create a new release</T>
      </div>
      <div className="pt-[21px] text-[11.3px] leading-[18px]">
        <div className="flex h-8 items-center"><T w={67} c="text-[15px] font-semibold text-[#24292f]">Packages</T></div>
        <div className="mt-3"><T w={123} c="block">No packages published</T></div>
      </div>
    </div>
  );
}

function LeftBrowser() {
  return (
    <div className="flex h-[728px] flex-col bg-white">
      <div className="flex h-[34px] shrink-0 bg-[#dee1e6] pl-2 text-[11.3px] text-[#3c4043]">
        <div className="flex h-full w-60 items-center rounded-t-lg bg-white pl-3">
          <FaGithub className="size-4 shrink-0 text-[#24292f]" /><T w={172} c="ml-2">advancedathletix/challenge-quiz</T><MdClose className="ml-[9px] size-3.5" />
        </div>
        <div className="flex items-center pl-[11px]">
          <Swirl /><div className="relative ml-2"><T w={175}>4. Web APIs Challenge: Code Qui</T><div className="absolute inset-y-0 right-0 w-4 bg-linear-to-r from-transparent to-[#dee1e6]" /></div>
          <MdClose className="ml-1.5 size-3.5" /><span className="ml-2 h-5 w-px bg-[#80868b]" /><MdAdd className="ml-3 size-[18px]" />
        </div>
        <div className="ml-auto flex h-[28px] items-center text-black">
          <Cell c="w-[46px]"><svg viewBox="0 0 10 6" className="h-1.5 w-2.5 fill-none stroke-current"><path d="M0 .5l5 5 5-5" /></svg></Cell>
          <Cell c="w-[46px]"><Min /></Cell><Cell c="w-[46px]"><Restore /></Cell><Cell c="w-[46px]"><Close /></Cell>
        </div>
      </div>
      <div className="flex h-9 shrink-0 items-center pl-1.5 text-[#5f6368]">
        <Cell><MdArrowBack className="size-[18px]" /></Cell><Cell><MdArrowForward className="size-[18px] opacity-50" /></Cell>
        <Cell><MdRefresh className="size-5" /></Cell><Cell><Home /></Cell>
        <div className="ml-1.5 flex h-7 w-[990px] items-center rounded-full bg-[#f1f3f4] pr-0.5 pl-2.5 text-[13px]">
          <MdLock className="size-4" /><T w={70} c="ml-2 text-[#202124]">github.com</T><T w={206} c="text-[#6a6e73]">/advancedathletix/challenge-quiz</T>
          <div className="ml-auto flex"><Cell><Share /></Cell><Cell><MdStarBorder className="size-[19px]" /></Cell></div>
        </div>
        <Cell c="ml-1.5 w-8"><span className="flex size-4 items-center justify-center bg-black text-[12px] font-extrabold text-white">Q</span></Cell>
        <Cell><Ninja /></Cell>
        <Cell><span className="flex size-4 items-center justify-center bg-[#222] pb-[3px] font-['Liberation_Serif',serif] text-[17px] leading-none text-white">p</span></Cell>
        <Cell><GreenUp /></Cell>
        <Cell><MdExtension className="size-[18px]" /></Cell>
        <Cell><span className="flex size-[22px] items-center justify-center rounded-full bg-[#8d6e63] text-[11px] text-white">A</span></Cell>
        <Cell><MdMoreVert className="size-[19px]" /></Cell>
      </div>
      <div className="flex h-[33px] shrink-0 items-center border-b border-[#d5d7da] pr-[15px] pb-1 pl-3.5">
        <div className="flex gap-4">
          <Mark icon={<AppsMark />} text="Apps" w={27} /><Mark icon={<Fb />} text="Welcome to Facebo..." w={113} />
          <Mark icon={<FolderMark />} text="recipes" w={39} /><Mark icon={<Globe />} text="ucf boot camp" w={77} /><Mark icon={<FolderMark />} text="coding" w={37} />
        </div>
        <div className="ml-auto flex items-center gap-[11px]"><span className="h-4 w-px bg-[#c8cbd0]" /><Mark icon={<Reading />} text="Reading list" w={61} /></div>
      </div>
      <div className="flex min-h-0 flex-1 overflow-hidden">
        <div className="flex w-[1349px] flex-col overflow-hidden">
          <GitHubHeader />
          <RepoHead />
          <div className="flex min-h-0 flex-1"><FilesColumn /><Sidebar /></div>
        </div>
        <div className="flex w-[17px] flex-col items-center bg-[#f1f1f1]">
          <Caret c="mt-[7px] rotate-180 text-[#a3a3a3]" />
          <div className="mt-1.5 h-[343px] w-[13px] bg-[#c1c1c1]" />
          <Caret c="mt-auto mb-[7px] text-[#505050]" />
        </div>
      </div>
    </div>
  );
}

function LeftTaskbar() {
  return (
    <div className="flex h-10 items-center bg-[#1c2b36]">
      <Cell c="h-10 w-12 bg-[#292929]"><Win /></Cell>
      <div className="flex h-10 w-[344px] shrink-0 items-center gap-3 border border-[#bcbcbc] bg-[#f1f1f1] pl-[11px] text-sm text-[#333]"><Lens c="stroke-[#222]" /><T w={128}>Type here to search</T></div>
      <Cell c="w-12"><Ring /></Cell><Cell c="w-12"><TaskView /></Cell>
      <span className="w-[3px] shrink-0" />
      <AppButtons cell="w-[37.6px]" active="bg-[#4a5963]" bar="w-[28px] has-[+span]:w-5" tail="w-2" />
      <svg viewBox="0 0 24 24" className="ml-[14px] size-[22px] shrink-0">
        <circle cx="11" cy="9" r="8.500" fill="#fbb829" /><path fill="#cfe4f7" d="M5 23a4.500 4.500 0 01-1-8.800A6.500 6.500 0 0116 12a5.500 5.500 0 013 11z" />
      </svg>
      <svg viewBox="0 0 12 7" className="ml-5 h-[7px] w-3 shrink-0 fill-none stroke-white stroke-[1.3]"><path d="M.5 6.500L6 1l5.500 5.500" /></svg>
      <svg viewBox="0 0 14 14" className="ml-[11px] size-3.5 shrink-0"><path fill="#b9120e" d="M0 2h12v12H0z" /><path d="M2 12c3-2 4-5 4-8 1 4 2 5 5 5.500-4 0-6 .5-9 2.500z" fill="none" stroke="#fff" /><circle cx="11.500" cy="2.500" r="2.500" fill="#e9a23b" /></svg>
      <svg viewBox="0 0 16 16" className="ml-2.5 size-4 shrink-0 fill-none stroke-white stroke-[1.2]"><path d="M3 4.500h6.500v7H3zM9.500 7l3-1.800v5.600l-3-1.800M3 2q4-2.500 8 0M3 14q4 2.500 8 0" /></svg>
      <svg viewBox="0 0 18 14" className="ml-[7px] h-3.5 w-[18px] shrink-0 fill-none stroke-white stroke-[1.2]"><path d="M6 4.500h10v6.500H5.500V8M17 6.500v2.500M1.500 3.500h4v2a2 2 0 01-4 0zM2.500 1v2M4.500 1v2M3.500 7.500V10" /><path fill="#fff" stroke="none" d="M8 6h6.500v3.500H7z" /></svg>
      <svg viewBox="0 0 14 14" className="ml-[9px] size-3.5 shrink-0 fill-none stroke-white stroke-[1.2]"><path opacity=".6" d="M1.500 13A11.500 11.500 0 0113 1.500" /><path d="M4.500 13A8.500 8.500 0 0113 4.500M7.500 13A5.500 5.500 0 0113 7.500" /><circle cx="12" cy="12" r="1" fill="#fff" /></svg>
      <svg viewBox="0 0 17 14" className="ml-2 h-3.5 w-[17px] shrink-0 fill-none stroke-white stroke-[1.1]"><path d="M.8 5h2.500L7 1.500v11L3.300 9H.8zM9 5q1.500 2 0 4M11 3.500q3 3.500 0 7M13 2q4.500 5 0 10" /></svg>
      <div className="ml-[9px]"><Clock /></div>
      <div className="relative ml-[18px] size-6 shrink-0">
        <svg viewBox="0 0 24 24" className="size-6"><path fill="#fff" d="M0 2h16v13H7l-3 3v-3H0z" /><path stroke="#1c2b36" strokeWidth="1.300" d="M3 5.500h10M3 8.500h10M3 11.500h6" /></svg>
        <span className="absolute right-0 -bottom-1 flex size-4 items-center justify-center rounded-full border border-[#aaa] bg-[#333b42] text-[10px] text-white">2</span>
      </div>
      <span className="ml-auto mr-1 h-full w-px bg-[#5b6670]" />
    </div>
  );
}

/* ---------- right display ---------- */

function RightBrowser() {
  return (
    <div className="flex h-[1040px] flex-col bg-white">
      <div className="flex h-[34px] shrink-0 bg-[#e7eaed] pl-2 text-[11.3px] text-[#5f6368]">
        <div className="flex h-full w-60 items-center rounded-t-lg bg-white pr-[9px] pl-[11px]">
          <MdPublic className="size-[18px] text-[#303845]" /><T w={55} c="ml-[7px]">Code Quiz</T><MdClose className="ml-auto size-3.5" />
        </div>
        <div className="flex items-center pl-[13px]"><MdAdd className="size-[18px]" /></div>
        <div className="ml-auto flex items-center text-[#80868b]">
          <svg viewBox="0 0 14 14" className="mr-[14px] size-3.5"><circle cx="7" cy="7" r="7" fill="#5f6368" /><path fill="#fff" d="M3.800 5h6.400L7 9.500z" /></svg>
          <div className="flex h-7 self-start"><Cell c="w-[46px]"><Min /></Cell><Cell c="w-[46px]"><Restore /></Cell><Cell c="w-[46px]"><Close /></Cell></div>
        </div>
      </div>
      <div className="flex h-9 shrink-0 items-center pl-1.5 text-[#5f6368]">
        <Cell><MdArrowBack className="size-[18px] opacity-50" /></Cell><Cell><MdArrowForward className="size-[18px] opacity-50" /></Cell><Cell><MdRefresh className="size-5" /></Cell>
        <div className="ml-1.5 flex h-7 w-[1672px] items-center rounded-full bg-[#f1f3f4] pr-0.5 pl-2.5 text-[13px]">
          <Info /><T w={21} c="ml-2">File</T><span className="mx-[7px] h-4 w-px bg-[#9aa0a6]" /><T w={397} c="ml-[2px] text-[#202124]">C:/Users/elijah/Desktop/New%20folder/practice-quiz/index.html</T>
          <Cell c="ml-auto w-8"><MdStarBorder className="size-[19px]" /></Cell>
        </div>
        <Cell c="ml-1.5 w-8"><ShieldAB /></Cell><Cell><MdExtension className="size-[18px]" /></Cell><Cell><ShieldCheck /></Cell><Cell><MdMoreVert className="size-[19px]" /></Cell>
      </div>
      <div className="flex h-[33px] shrink-0 items-center border-b border-[#d5d7da] pr-[15px] pb-1 pl-3.5">
        <div className="flex gap-4">
          <Mark icon={<Amazon />} text="Amazon.com" w={69} /><Mark icon={<Ebay />} text="eBay" w={26} /><Mark icon={<Fb />} text="Facebook" w={51} />
          <Mark icon={<FaYoutube className="size-4 text-[#f00]" />} text="YouTube" w={46} /><Mark icon={<FcGoogle className="size-4" />} text="Google" w={39} />
          <Mark icon={<Addons />} text="Addons Store" w={72} /><Mark icon={<Fb />} text="Welcome to Facebo..." w={114} />
          <Mark icon={<FolderMark />} text="recipes" w={38} /><Mark icon={<Globe />} text="ucf boot camp" w={77} /><Mark icon={<FolderMark />} text="coding" w={36} />
        </div>
        <div className="ml-auto flex items-center gap-[11px]"><span className="h-4 w-px bg-[#c8cbd0]" /><Mark icon={<Reading />} text="Reading list" w={61} /></div>
      </div>
      <div className="flex min-h-0 flex-1 flex-col bg-[#ff0000] font-['Lato',sans-serif] text-xl leading-6">
        <div className="flex h-[84px] shrink-0 items-center bg-black pl-2.5 text-white"><T w={104}>High Scores</T></div>
        <div className="mt-[100px] ml-[430px] flex h-64 w-[1060px] flex-col items-center justify-center bg-white pt-0.5 text-black shadow-[2px_2px_5px_#777]">
          <T w={282}>Welcome to the Javascript Quiz!</T>
          <div className="mt-5 flex flex-col items-center">
            <T w={943}>Your score will be based on answering the question correctly and how quickly you answer. For every question</T>
            <T w={955}>you answer correctly, you will be awarded 10 seconds. If you answer incorrectly you will lose 15 seconds. Press</T>
            <T w={333}>"start" when you are ready. Good luck!</T>
          </div>
        </div>
        <div className="mt-2.5 ml-[864px] flex h-[45px] w-[82px] items-center justify-center rounded-[5px] bg-black text-2xl text-white"><T w={52}>Start</T></div>
      </div>
    </div>
  );
}

function RightTaskbar() {
  return (
    <div className="flex h-10 items-center bg-[#2d2d2d]">
      <Cell c="w-12"><Win /></Cell><Cell c="w-12"><Lens c="stroke-white" /></Cell><Cell c="w-12"><Ring /></Cell><Cell c="w-12"><TaskView /></Cell>
      <span className="w-[3px]" />
      <AppButtons cell="w-[48.9px]" active="bg-[#555]" bar="w-10 has-[+span]:w-8" tail="w-2" />
      <div className="mr-1 ml-auto"><Clock /></div>
    </div>
  );
}

export default function App() {
  return (
    <div className="flex h-[1081px] w-[3286px] overflow-hidden bg-black font-['Open_Sans',sans-serif]">
      <div className="w-[1366px] shrink-0 pt-[313px]">
        <LeftBrowser />
        <LeftTaskbar />
      </div>
      <div className="w-[1920px] shrink-0">
        <RightBrowser />
        <RightTaskbar />
      </div>
    </div>
  );
}
